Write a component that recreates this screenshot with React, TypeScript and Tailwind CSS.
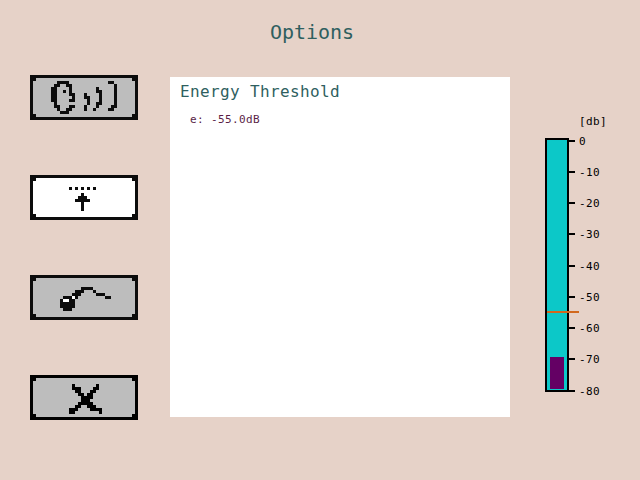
const HEAD = [
  "",
  "",
  ".........####.............##",
  "........##..##..............#",
  ".......##....#........#.....#",
  ".......##..#.#........##....#",
  ".......##....##...#....#....#",
  ".......##.....#...##...#....#",
  ".......##....##....#...#....#",
  "........#..........#..##....#",
  "........##...##...#...#....##",
  ".........#..##....#..#....##",
  "..........###",
];

const ARROW = [
  "", "", "", "",
  ".............#.#.#.#.#",
  "",
  ".................#",
  "................###",
  "...............#####",
  ".................#",
  ".................#",
  ".................#",
];

const BOMB = [
  "", "", "", "",
  ".................####",
  "...............###...#",
  "..............###.....###",
  "...........###o#.........##",
  "..........#oo##",
  "..........#####",
  "..........#####",
  "...........###",
];

const CROSS = [
  "", "", "",
  "..............#.......#",
  "..............###....##",
  "...............##...##",
  "................##.##",
  ".................####",
  ".................###",
  "................#####",
  "...............##..###",
  ".............###....####",
  ".............##........#",
];

function PixelButton({ rows, label, active = false, ink = "#0c0c0c" }: { rows: string[]; label: string; active?: boolean; ink?: string }) {
  return (
    <button aria-label={label} className={`block h-[45px] w-[108px] ${active ? "bg-white" : "bg-[#bdbdbd]"}`}>
      <svg viewBox="0 0 36 15" className="block h-full w-full" shapeRendering="crispEdges">
        <path fill={ink} d="M0 0H36V15H0ZM2 1V2H1V13H2V14H34V13H35V2H34V1Z" fillRule="evenodd" />
        {rows.flatMap((row, y) =>
          [...row].map((c, x) =>
            c === "." ? null : <rect key={`${x}-${y}`} x={x} y={y} width="1" height="1" fill={c === "o" ? "#fff" : ink} />
          )
        )}
      </svg>
    </button>
  );
}

const TICKS = [
  { value: "0", row: "h-[31px]" },
  { value: "-10", row: "h-[31px]" },
  { value: "-20", row: "h-[31px]" },
  { value: "-30", row: "h-[32px]" },
  { value: "-40", row: "h-[31px]" },
  { value: "-50", row: "h-[31px]" },
  { value: "-60", row: "h-[31px]" },
  { value: "-70", row: "h-[32px]" },
  { value: "-80", row: "h-[2px]" },
];

function Meter() {
  return (
    <section className="w-[70px] pt-10 text-[11px] leading-[14px] tracking-[0.378px] text-black">
      <div className="ml-[34px]">[db]</div>
      <div className="mt-[9px] flex">
        <div className="relative flex h-[254px] w-6 flex-col justify-end border-2 border-black bg-[#0cc8c8] px-[3px] pb-px">
          <div className="h-8 bg-[#640064]" />
          <div className="absolute left-0 top-[171px] h-[2px] w-8 bg-[#d2691e]" />
        </div>
        <div className="pt-[2px]">
          {TICKS.map(({ value, row }) => (
            <div key={value} className={row}>
              <div className="flex h-[2px] items-center">
                <span className="h-[2px] w-[6px] shrink-0 bg-black" />
                <span className="ml-1 pt-[2px]">{value}</span>
              </div>
            </div>
          ))}
        </div>
      </div>
    </section>
  );
}

export default function App() {
  return (
    <main className="h-[480px] w-[640px] overflow-hidden bg-[#e6d2c8] font-['DejaVu_Sans_Mono',monospace]">
      <h1 className="h-[75px] pl-[270px] pt-5 text-[20px] leading-6 tracking-[-0.04px] text-[#2f5f5f]">Options</h1>
      <div className="flex pl-[30px]">
        <nav className="flex flex-col gap-[55px]">
          <PixelButton rows={HEAD} label="Voice" />
          <PixelButton rows={ARROW} label="Threshold" active />
          <PixelButton rows={BOMB} label="Bomb" />
          <PixelButton rows={CROSS} label="Close" ink="#000000" />
        </nav>
        <section className="ml-8 mt-[2px] h-[340px] w-[340px] bg-white pl-[10px] pt-[5px]">
          <h2 className="text-[16px] leading-5 tracking-[0.367px] text-[#2f5f5f]">Energy Threshold</h2>
          <p className="ml-[10px] mt-[11px] text-[11px] leading-[14px] tracking-[0.378px] text-[#5a1e46]">e: -55.0dB</p>
        </section>
        <div className="ml-[35px]">
          <Meter />
        </div>
      </div>
    </main>
  );
}
